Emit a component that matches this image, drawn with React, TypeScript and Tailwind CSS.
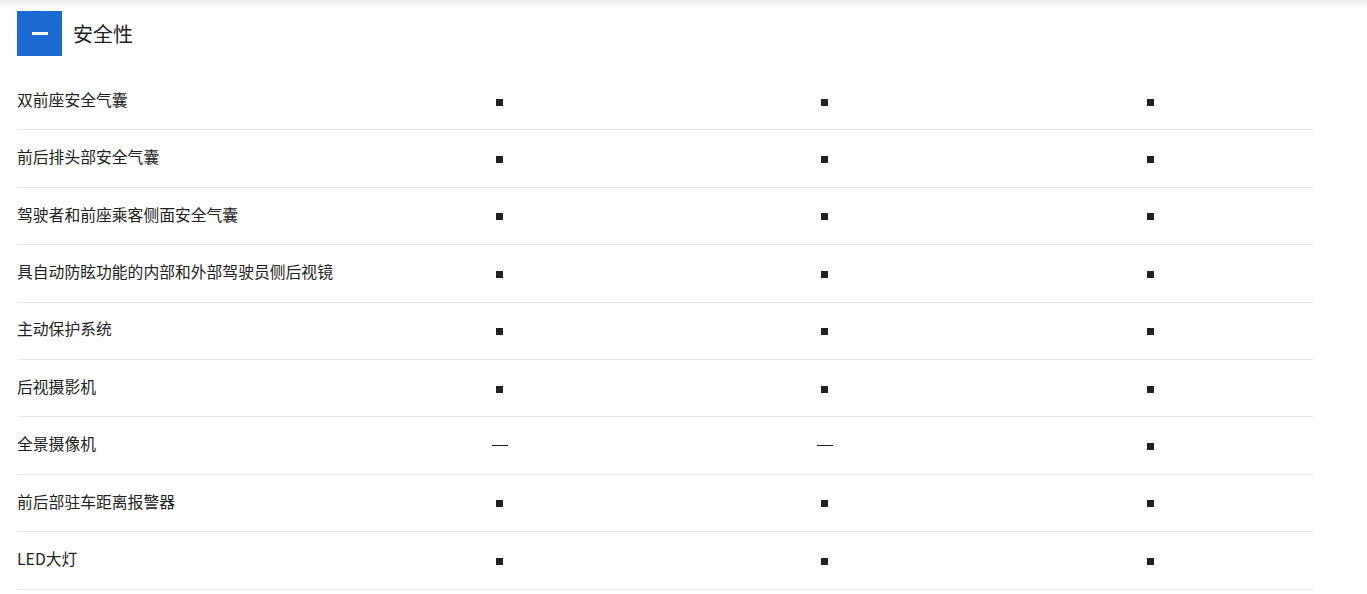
import React from "react";

const rows: { label: string; v: string[] }[] = [
  { label: "双前座安全气囊", v: ["■", "■", "■"] },
  { label: "前后排头部安全气囊", v: ["■", "■", "■"] },
  { label: "驾驶者和前座乘客侧面安全气囊", v: ["■", "■", "■"] },
  { label: "具自动防眩功能的内部和外部驾驶员侧后视镜", v: ["■", "■", "■"] },
  { label: "主动保护系统", v: ["■", "■", "■"] },
  { label: "后视摄影机", v: ["■", "■", "■"] },
  { label: "全景摄像机", v: ["—", "—", "■"] },
  { label: "前后部驻车距离报警器", v: ["■", "■", "■"] },
  { label: "LED大灯", v: ["■", "■", "■"] },
];

function Mark({ v }: { v: string }) {
  if (v === "■") {
    return <span className="inline-block w-[7px] h-[7px] bg-[#222222] mt-[2px]" />;
  }
  return <span className="inline-block w-[16px] h-[1px] bg-[#222222]" />;
}

export default function App() {
  return (
    <div
      className="w-[1367px] h-[594px] bg-white text-[#222222] overflow-hidden"
      style={{ fontFamily: '"Noto Sans CJK SC", "Noto Sans", sans-serif' }}
    >
      <div className="h-[8px] bg-gradient-to-b from-[#ececec] to-white" />
      <div className="px-[17px]">
        <div className="flex items-center gap-[11px] pt-[3px]">
          <div className="w-[45px] h-[45px] bg-[#1b69d3] flex items-center justify-center">
            <span className="block w-[16px] h-[3px] bg-white" />
          </div>
          <span className="text-[20px] leading-none">安全性</span>
        </div>
        <div className="w-[1296px] mt-[17px]">
          {rows.map((r) => (
            <div
              key={r.label}
              className="grid grid-cols-[320px_1fr_1fr_1fr] items-center h-[57.4px] border-b border-[#e5e5e5]"
            >
              <div className="text-[15.8px] leading-none pb-[3px]">{r.label}</div>
              {r.v.map((v, i) => (
                <div key={i} className="flex justify-center items-center">
                  <Mark v={v} />
                </div>
              ))}
            </div>
          ))}
        </div>
      </div>
    </div>
  );
}
